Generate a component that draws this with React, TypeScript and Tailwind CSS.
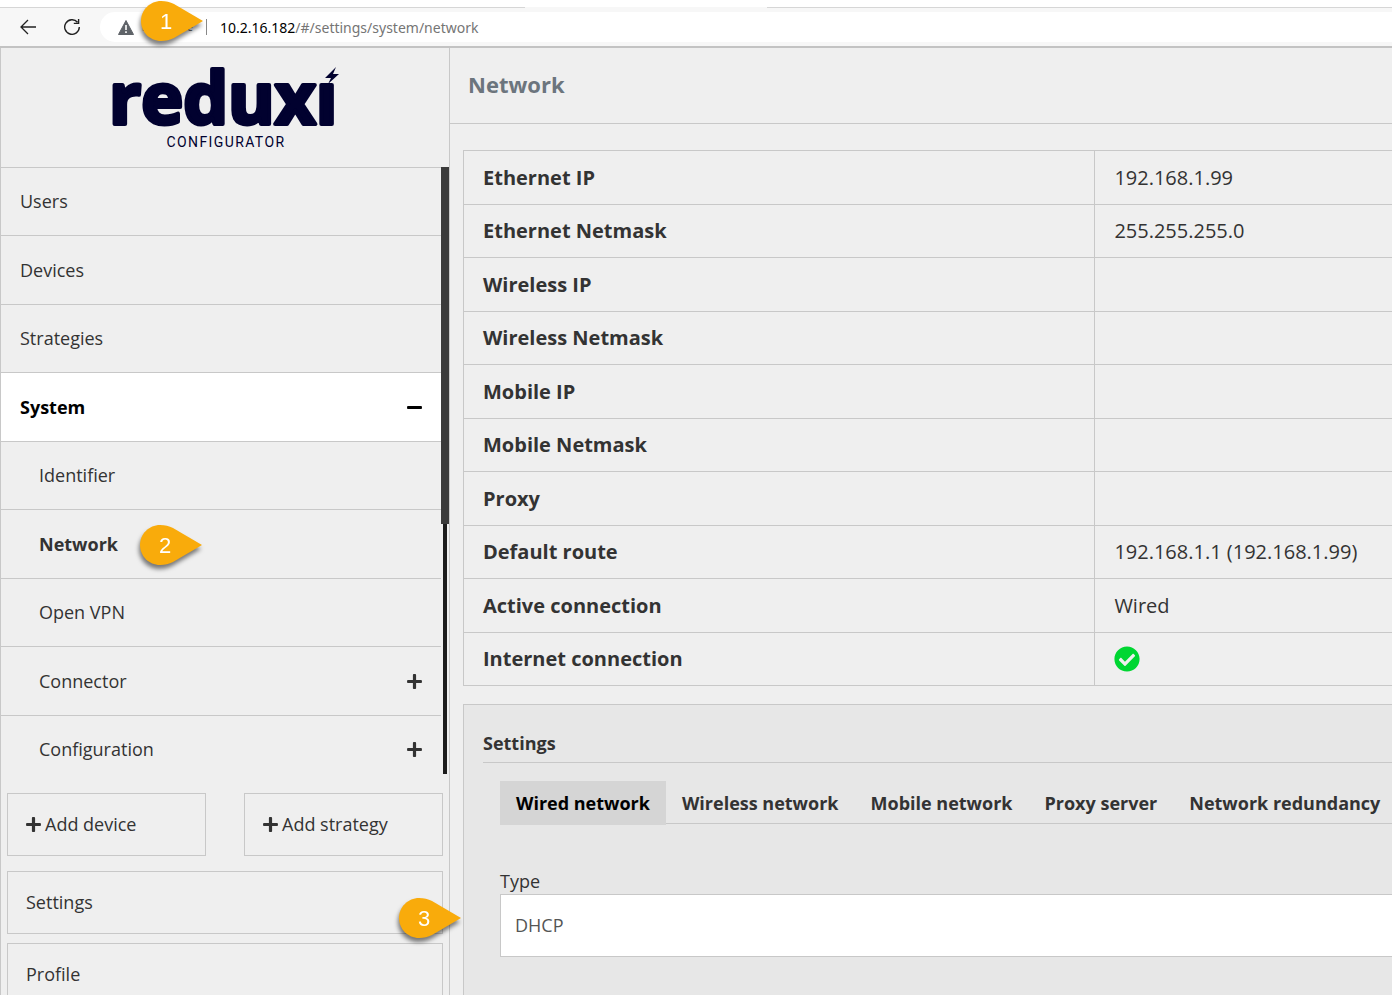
import { useState } from "react";
import { FaCheckCircle, FaMinus, FaPlus } from "react-icons/fa";

interface MenuItem {
  label: string;
  nested?: boolean;
  icon?: "plus" | "minus";
  callout?: string;
}

const MENU: MenuItem[] = [
  { label: "Users" },
  { label: "Devices" },
  { label: "Strategies" },
  { label: "System", icon: "minus" },
  { label: "Identifier", nested: true },
  { label: "Network", nested: true, callout: "2" },
  { label: "Open VPN", nested: true },
  { label: "Connector", nested: true, icon: "plus" },
  { label: "Configuration", nested: true, icon: "plus" },
];

const STATUS: [string, string][] = [
  ["Ethernet IP", "192.168.1.99"],
  ["Ethernet Netmask", "255.255.255.0"],
  ["Wireless IP", ""],
  ["Wireless Netmask", ""],
  ["Mobile IP", ""],
  ["Mobile Netmask", ""],
  ["Proxy", ""],
  ["Default route", "192.168.1.1 (192.168.1.99)"],
  ["Active connection", "Wired"],
  ["Internet connection", "ok"],
];

const TABS = ["Wired network", "Wireless network", "Mobile network", "Proxy server", "Network redundancy"];

function Callout({ label, className }: { label: string; className: string }) {
  return (
    <svg
      className={`absolute z-10 h-[50px] w-[70px] overflow-visible font-normal drop-shadow-[-1px_4px_2px_rgba(0,0,0,0.5)] ${className}`}
      viewBox="0 0 70 50"
    >
      <path d="M20 0C9 0 0 9 0 20s9 20 20 20c5 0 9-1 13-3l29-17L33 3C29 1 25 0 20 0Z" fill="#f9ab0b" />
      <text x="25" y="28" textAnchor="middle" fontSize="22" fill="#fff" fontFamily="Liberation Sans, Arial, sans-serif">
        {label}
      </text>
    </svg>
  );
}

function BrowserBar() {
  return (
    <div className="shrink-0 bg-white pt-[7px]">
      <div className="relative flex h-[41px] items-center border-t border-b-2 border-t-[#d6d6d6] border-b-[#c3c3c3] bg-[#f7f7f7] font-['Noto_Sans',sans-serif] text-[14px]">
        <div className="absolute -top-px left-[37.7%] h-px w-[17.4%] bg-[#f7f7f7]" />
        <button type="button" aria-label="Back" className="ml-5 w-4">
          <svg viewBox="0 0 16 16" className="h-4 w-4" fill="none" stroke="#222" strokeWidth="1.3">
            <path d="M16 8H1M8 1L1 8l7 7" />
          </svg>
        </button>
        <button type="button" aria-label="Reload" className="ml-7 w-4">
          <svg viewBox="0 0 16 16" className="h-4 w-4" fill="none" stroke="#222" strokeWidth="1.4">
            <path d="M13.5 3.2A7.3 7.3 0 1 0 15.3 8M14.6 0v4.4h-4.8" />
          </svg>
        </button>
        <div className="ml-5 flex h-[30px] flex-1 items-center rounded-l-full bg-white pl-[18px]">
          <svg viewBox="0 0 16 15" className="h-[15px] w-4">
            <path d="M8 0.5L15.5 14.5H.5Z" fill="#5f6368" stroke="#5f6368" strokeLinejoin="round" />
            <path d="M8 5v5M8 11.3v1.6" stroke="#fff" strokeWidth="1.6" />
          </svg>
          <span className="ml-2 w-[53px] text-[10px] whitespace-nowrap text-[#666]">Not secure</span>
          <span className="ml-[11px] h-4 w-px bg-[#888]" />
          <span className="ml-[13px] text-[#757575]">
            <span className="text-black">10.2.16.182</span>/#/settings/system/network
          </span>
        </div>
        <Callout label="1" className="-top-[7px] left-[141px]" />
      </div>
    </div>
  );
}

function Logo() {
  return (
    <svg viewBox="0 0 240 90" className="h-[90px] w-[240px] overflow-visible" fill="#01012f">
      <text
        x="4"
        y="64"
        fontFamily="Open Sans, sans-serif"
        fontWeight="700"
        fontSize="71"
        stroke="#01012f"
        strokeWidth="4"
        strokeLinejoin="round"
      >
        reduxı
      </text>
      <path d="M231 7L220 18h6l-3 6 11-10h-6Z" />
      <text x="121" y="87" textAnchor="middle" fontFamily="Roboto, sans-serif" fontSize="14" className="tracking-widest">
        CONFIGURATOR
      </text>
    </svg>
  );
}

function Sidebar() {
  return (
    <aside className="flex w-[450px] shrink-0 flex-col border-x border-[#c8c8c8] text-[18px]">
      <div className="flex h-[119px] shrink-0 justify-center pt-3">
        <Logo />
      </div>
      <div className="flex h-[607px] shrink-0">
        <nav className="flex-1">
          {MENU.map((item) => (
            <a
              key={item.label}
              href="#"
              className={`relative flex items-center justify-between border-t border-[#c8c8c8] pr-[18px] odd:h-[68px] even:h-[69px] ${
                item.nested ? "pl-[38px]" : "pl-[19px]"
              } ${item.icon === "minus" ? "bg-white font-bold text-black" : ""} ${item.callout ? "font-bold" : ""}`}
            >
              {item.label}
              {item.icon === "plus" && <FaPlus size={17} />}
              {item.icon === "minus" && <FaMinus size={17} />}
              {item.callout && <Callout label={item.callout} className="top-[15px] left-[139px]" />}
            </a>
          ))}
        </nav>
        <div className="flex w-2 flex-col items-center">
          <div className="h-[357px] w-2 bg-[#3a3a3a]" />
          <div className="w-1 flex-1 bg-[#1c1c1c]" />
        </div>
      </div>
      <div className="mx-[6px] mt-[19px] flex shrink-0 justify-between">
        {["Add device", "Add strategy"].map((label) => (
          <button key={label} type="button" className="flex h-[63px] w-[199px] items-center gap-[3px] border border-[#c8c8c8] pl-[17px]">
            <FaPlus size={17} />
            {label}
          </button>
        ))}
      </div>
      <div className="relative mx-[6px] mt-[15px] flex shrink-0 flex-col gap-[9px]">
        <a href="#" className="flex h-[63px] items-center border border-[#c8c8c8] pl-[18px]">Settings</a>
        <a href="#" className="flex h-[63px] items-center border border-[#c8c8c8] pl-[18px]">Profile</a>
        <Callout label="3" className="top-[27px] left-[392px]" />
      </div>
    </aside>
  );
}

function StatusTable() {
  return (
    <table className="w-full table-fixed border-collapse border-l border-[#c8c8c8] text-left text-[20px]">
      <tbody>
        {STATUS.map(([name, value]) => (
          <tr key={name} className="border-y border-[#c8c8c8] odd:h-[54px] even:h-[53px]">
            <th scope="row" className="w-[68%] pl-[19px] font-bold">{name}</th>
            <td className="border-l border-[#c8c8c8] pl-[19px]">
              {value === "ok" ? <FaCheckCircle size={26} color="#00d632" aria-label="Connected" /> : value}
            </td>
          </tr>
        ))}
      </tbody>
    </table>
  );
}

function SettingsPanel() {
  const [tab, setTab] = useState(TABS[0]);

  return (
    <section className="mt-[18px] flex-1 border-t border-l border-[#c8c8c8] bg-[#e7e7e7] pl-[19px] text-[18px]">
      <h2 className="flex h-[58px] items-end border-b border-[#c8c8c8] pb-[5px] font-bold">Settings</h2>
      <div className="mt-[18px] ml-[17px]">
        <div role="tablist" className="flex h-[43px] border-b border-[#c8c8c8] whitespace-nowrap">
          {TABS.map((name) => (
            <button
              key={name}
              type="button"
              role="tab"
              aria-selected={name === tab}
              onClick={() => setTab(name)}
              className={`h-[44px] shrink-0 px-4 font-bold ${name === tab ? "bg-[#d5d5d5] text-black" : ""}`}
            >
              {name}
            </button>
          ))}
        </div>
        <label htmlFor="type" className="mt-11 block leading-[26px]">Type</label>
        <select
          id="type"
          className="h-[63px] w-full appearance-none border border-r-0 border-[#c8c8c8] bg-white pl-[14px] text-[#555]"
        >
          <option>DHCP</option>
          <option>Static</option>
        </select>
      </div>
    </section>
  );
}

export default function App() {
  return (
    <div className="flex h-screen flex-col overflow-hidden bg-[#efefef] font-['Open_Sans',sans-serif] text-[#333]">
      <BrowserBar />
      <div className="flex min-h-0 flex-1">
        <Sidebar />
        <main className="flex min-w-0 flex-1 flex-col">
          <h1 className="flex h-[76px] shrink-0 items-center border-b border-[#c8c8c8] pb-0.5 pl-[18px] text-[22px] font-bold text-[#6c757d]">
            Network
          </h1>
          <div className="flex flex-1 flex-col pt-[26px] pl-[13px]">
            <StatusTable />
            <SettingsPanel />
          </div>
        </main>
      </div>
    </div>
  );
}
